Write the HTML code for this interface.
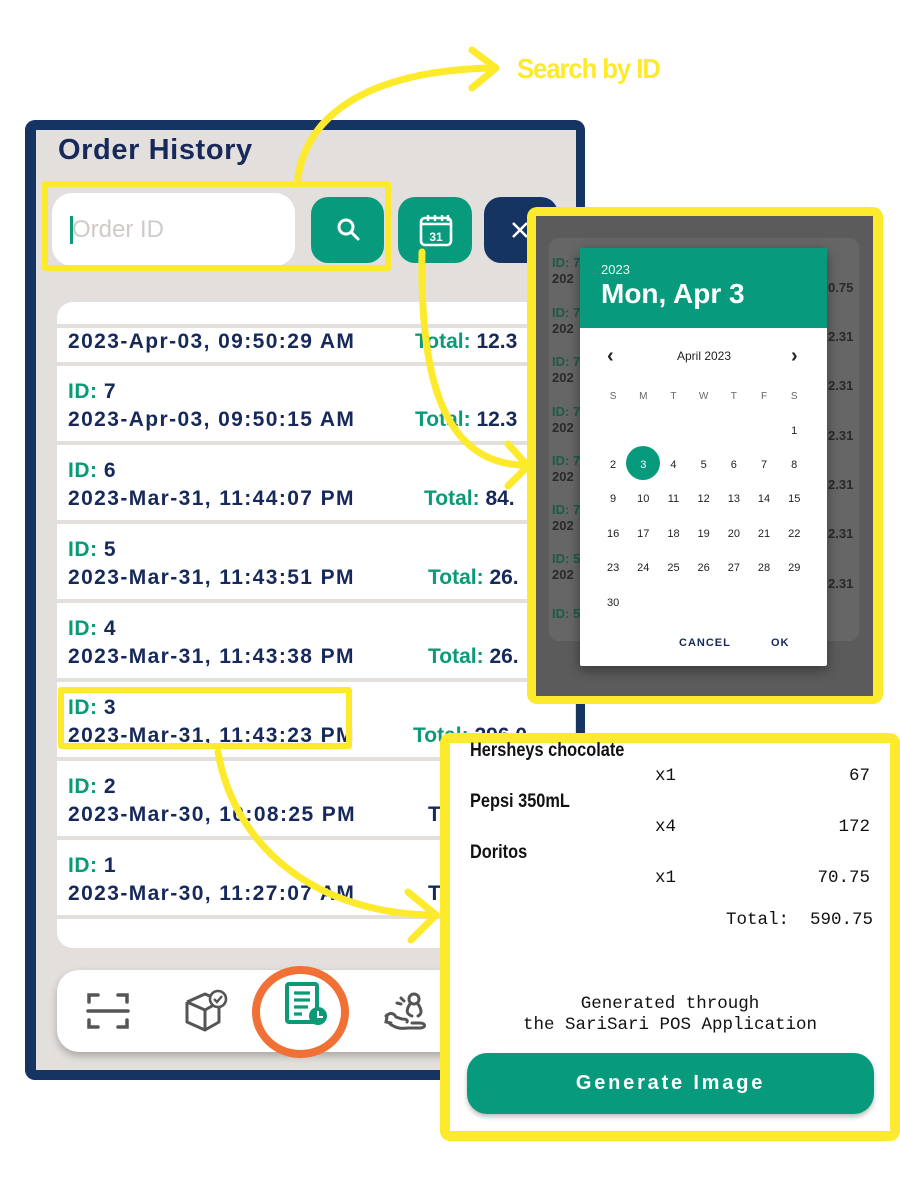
<!DOCTYPE html>
<html><head><meta charset="utf-8"><style>
*{margin:0;padding:0;box-sizing:border-box}
body{width:900px;height:1200px;background:#fff;position:relative;overflow:hidden;font-family:"Liberation Sans",sans-serif}
.a{position:absolute}
.navy{color:#16295a}
.grn{color:#0b9a78}
.row{position:absolute;left:57px;width:518px;background:#fff;height:75px}
.row .id{position:absolute;left:11px;top:14px;font-size:21px;font-weight:bold;color:#16295a;letter-spacing:0.5px}
.row .dt{position:absolute;left:11px;top:42px;font-size:21px;font-weight:bold;color:#16295a;white-space:nowrap;letter-spacing:1.4px}
.row .tt{position:absolute;top:42px;font-size:21px;font-weight:bold;color:#16295a;white-space:nowrap}
.cal td{width:30.2px;height:34.4px;text-align:center;font-size:11px;color:#222;font-family:"Liberation Sans",sans-serif}
.mono{font-family:"Liberation Mono",monospace;font-size:17.5px;color:#111}
.it{font-family:"Liberation Sans",sans-serif;font-weight:bold;font-size:19px;color:#111;transform:scaleX(0.86);transform-origin:left;white-space:nowrap}
</style></head><body>

<!-- phone -->
<div class="a" style="left:25px;top:120px;width:560px;height:960px;background:#163461;border-radius:10px"></div>
<div class="a" style="left:36px;top:130px;width:540px;height:940px;background:#e2dfdc"></div>
<div class="a navy" style="left:58px;top:134px;font-size:29px;font-weight:bold;color:#16295a;letter-spacing:0.6px">Order History</div>
<div class="a" style="left:52px;top:193px;width:243px;height:73px;background:#fff;border-radius:20px"></div>
<div class="a" style="left:70px;top:216px;width:3px;height:28px;background:#0b9a78"></div>
<div class="a" style="left:72px;top:216px;font-size:24px;color:#cfcac8">Order ID</div>
<div class="a" style="left:311px;top:197px;width:73px;height:66px;background:#089a7c;border-radius:17px"></div>
<svg class="a" style="left:334px;top:216px" width="28" height="28" viewBox="0 0 28 28"><circle cx="12" cy="11" r="7" fill="none" stroke="#fff" stroke-width="3"/><path d="M17 16l7 7" stroke="#fff" stroke-width="3" stroke-linecap="round"/></svg>
<div class="a" style="left:398px;top:197px;width:74px;height:66px;background:#089a7c;border-radius:17px"></div>
<svg class="a" style="left:418px;top:212px" width="36" height="36" viewBox="0 0 36 36"><rect x="3" y="6" width="30" height="27" rx="4" fill="none" stroke="#fff" stroke-width="2.6"/><path d="M3 12h30M10 3v6M17 3v6M24 3v6M30 3v6" stroke="#fff" stroke-width="2.4"/><text x="18" y="29" font-size="12" font-weight="bold" fill="#fff" text-anchor="middle" font-family="Liberation Sans">31</text></svg>
<div class="a" style="left:484px;top:197px;width:74px;height:66px;background:#163461;border-radius:17px"></div>
<svg class="a" style="left:510px;top:220px" width="20" height="20"><path d="M3 3l14 14M17 3L3 17" stroke="#fff" stroke-width="2.6"/></svg>

<!-- list -->
<div class="a" style="left:57px;top:302px;width:518px;height:646px;background:#e2dfdc"></div>
<div class="a" style="left:57px;top:302px;width:518px;height:22px;background:#fff;border-radius:16px 16px 0 0"></div>
<div class="row" style="top:328px;height:34px"><div class="dt" style="top:2px">2023-Apr-03, 09:50:29 AM</div><div class="tt" style="left:358px;top:2px"><span class="grn">Total:</span> 12.3</div></div>
<div class="row" style="top:366px"><div class="id"><span class="grn">ID:</span> 7</div><div class="dt">2023-Apr-03, 09:50:15 AM</div><div class="tt" style="left:358px"><span class="grn">Total:</span> 12.3</div></div>
<div class="row" style="top:445px"><div class="id"><span class="grn">ID:</span> 6</div><div class="dt">2023-Mar-31, 11:44:07 PM</div><div class="tt" style="left:367px"><span class="grn">Total:</span> 84.</div></div>
<div class="row" style="top:524px"><div class="id"><span class="grn">ID:</span> 5</div><div class="dt">2023-Mar-31, 11:43:51 PM</div><div class="tt" style="left:371px"><span class="grn">Total:</span> 26.</div></div>
<div class="row" style="top:603px"><div class="id"><span class="grn">ID:</span> 4</div><div class="dt">2023-Mar-31, 11:43:38 PM</div><div class="tt" style="left:371px"><span class="grn">Total:</span> 26.</div></div>
<div class="row" style="top:682px"><div class="id"><span class="grn">ID:</span> 3</div><div class="dt">2023-Mar-31, 11:43:23 PM</div><div class="tt" style="left:356px"><span class="grn">Total:</span> 296.0</div></div>
<div class="row" style="top:761px"><div class="id"><span class="grn">ID:</span> 2</div><div class="dt">2023-Mar-30, 10:08:25 PM</div><div class="tt grn" style="left:371px">Total:</div></div>
<div class="row" style="top:840px"><div class="id"><span class="grn">ID:</span> 1</div><div class="dt">2023-Mar-30, 11:27:07 AM</div><div class="tt grn" style="left:371px">Total:</div></div>
<div class="a" style="left:57px;top:919px;width:518px;height:29px;background:#fff;border-radius:0 0 16px 16px"></div>
<!-- highlight id3 -->
<div class="a" style="left:58px;top:687px;width:294px;height:62px;border:6px solid #fdea2d;border-radius:3px"></div>
<div class="a" style="left:42px;top:181px;width:349px;height:90px;border:6px solid #fdea2d;border-radius:3px"></div>

<!-- nav -->
<div class="a" style="left:57px;top:970px;width:480px;height:82px;background:#fff;border-radius:22px;box-shadow:0 4px 8px rgba(0,0,0,.25)"></div>
<svg class="a" style="left:86px;top:990px" width="44" height="42" viewBox="0 0 44 42"><path d="M3 12V5h9M32 5h9v7M3 30v7h9M32 37h9v-7M2 21h40" fill="none" stroke="#555" stroke-width="3.5" stroke-linecap="round"/></svg>
<svg class="a" style="left:183px;top:988px" width="48" height="46" viewBox="0 0 48 46"><path d="M4 14l18-8 14 6M4 14l18 8 14-8M4 14v20l18 8V22M36 20v14l-14 8" fill="none" stroke="#555" stroke-width="3" stroke-linejoin="round"/><circle cx="35" cy="11" r="8" fill="#fff" stroke="#555" stroke-width="2.6"/><path d="M31 11l3 3 5-6" fill="none" stroke="#555" stroke-width="2.4"/></svg>
<svg class="a" style="left:284px;top:982px" width="46" height="46" viewBox="0 0 46 46"><rect x="3" y="2" width="30" height="38" rx="2" fill="none" stroke="#0b9a78" stroke-width="4"/><path d="M10 11h16M10 18h16M10 25h14M10 32h8" stroke="#0b9a78" stroke-width="3.2"/><circle cx="34" cy="34" r="9" fill="#0b9a78"/><path d="M34 29v6h5" fill="none" stroke="#fff" stroke-width="2"/></svg>
<svg class="a" style="left:383px;top:990px" width="46" height="44" viewBox="0 0 46 44"><circle cx="31" cy="9" r="5" fill="none" stroke="#555" stroke-width="3"/><path d="M27 14c-4 6-4 10 2 12M35 14c4 6 4 10 0 12M18 8l3 3M14 13l4 1M3 26c4-4 8-3 10 1l6 2c4 0 6 1 5 3M7 34c6 4 10 5 18 4h12c6 0 6-5 0-5h-8M4 27l-1 5 5 1" fill="none" stroke="#555" stroke-width="3" stroke-linecap="round"/></svg>
<div class="a" style="left:252px;top:966px;width:97px;height:92px;border:8px solid #f07035;border-radius:50%"></div>

<!-- calendar panel -->
<div class="a" style="left:527px;top:207px;width:356px;height:497px;background:#fdea2d;border-radius:10px"></div>
<div class="a" style="left:536px;top:216px;width:337px;height:480px;background:#5b5b5b"></div>
<div class="a" style="left:549px;top:238px;width:310px;height:403px;background:#666;border-radius:10px"></div>
<div class="a" style="left:552px;top:255px;font-size:13px;font-weight:bold;line-height:16px;color:#2a2a2a"><span style="color:#1d5a47">ID: 7</span><br>202</div>
<div class="a" style="left:552px;top:305px;font-size:13px;font-weight:bold;line-height:16px;color:#2a2a2a"><span style="color:#1d5a47">ID: 7</span><br>202</div>
<div class="a" style="left:552px;top:354px;font-size:13px;font-weight:bold;line-height:16px;color:#2a2a2a"><span style="color:#1d5a47">ID: 7</span><br>202</div>
<div class="a" style="left:552px;top:404px;font-size:13px;font-weight:bold;line-height:16px;color:#2a2a2a"><span style="color:#1d5a47">ID: 7</span><br>202</div>
<div class="a" style="left:552px;top:453px;font-size:13px;font-weight:bold;line-height:16px;color:#2a2a2a"><span style="color:#1d5a47">ID: 7</span><br>202</div>
<div class="a" style="left:552px;top:502px;font-size:13px;font-weight:bold;line-height:16px;color:#2a2a2a"><span style="color:#1d5a47">ID: 7</span><br>202</div>
<div class="a" style="left:552px;top:551px;font-size:13px;font-weight:bold;line-height:16px;color:#2a2a2a"><span style="color:#1d5a47">ID: 5</span><br>202</div>
<div class="a" style="left:552px;top:606px;font-size:13px;font-weight:bold;color:#1d5a47">ID: 5</div>
<div class="a" style="left:828px;top:280px;font-size:13px;font-weight:bold;color:#2a2a2a">0.75</div>
<div class="a" style="left:828px;top:329px;font-size:13px;font-weight:bold;color:#2a2a2a">2.31</div>
<div class="a" style="left:828px;top:378px;font-size:13px;font-weight:bold;color:#2a2a2a">2.31</div>
<div class="a" style="left:828px;top:428px;font-size:13px;font-weight:bold;color:#2a2a2a">2.31</div>
<div class="a" style="left:828px;top:477px;font-size:13px;font-weight:bold;color:#2a2a2a">2.31</div>
<div class="a" style="left:828px;top:526px;font-size:13px;font-weight:bold;color:#2a2a2a">2.31</div>
<div class="a" style="left:828px;top:576px;font-size:13px;font-weight:bold;color:#2a2a2a">2.31</div>
<div class="a" style="left:580px;top:248px;width:247px;height:418px;background:#fff;border-radius:2px;box-shadow:0 4px 12px rgba(0,0,0,.4)"></div>
<div class="a" style="left:580px;top:248px;width:247px;height:80px;background:#089a7c"></div>
<div class="a" style="left:601px;top:262px;font-size:13px;color:#e8f5f1">2023</div>
<div class="a" style="left:601px;top:278px;font-size:28px;color:#fff;font-weight:bold">Mon, Apr 3</div>
<div class="a" style="left:607px;top:345px;font-size:20px;font-weight:bold;color:#222">&#8249;</div>
<div class="a" style="left:791px;top:345px;font-size:20px;font-weight:bold;color:#222">&#8250;</div>
<div class="a" style="left:704px;top:349px;font-size:12px;color:#222;transform:translateX(-50%)">April 2023</div>
<div class="a" style="left:626px;top:446px;width:34px;height:34px;background:#089a7c;border-radius:50%"></div>
<table class="a cal" style="left:598px;top:379px;border-collapse:collapse">
<tr><td style="color:#666;font-size:10px">S</td><td style="color:#666;font-size:10px">M</td><td style="color:#666;font-size:10px">T</td><td style="color:#666;font-size:10px">W</td><td style="color:#666;font-size:10px">T</td><td style="color:#666;font-size:10px">F</td><td style="color:#666;font-size:10px">S</td></tr>
<tr><td></td><td></td><td></td><td></td><td></td><td></td><td>1</td></tr>
<tr><td>2</td><td style="color:#fff">3</td><td>4</td><td>5</td><td>6</td><td>7</td><td>8</td></tr>
<tr><td>9</td><td>10</td><td>11</td><td>12</td><td>13</td><td>14</td><td>15</td></tr>
<tr><td>16</td><td>17</td><td>18</td><td>19</td><td>20</td><td>21</td><td>22</td></tr>
<tr><td>23</td><td>24</td><td>25</td><td>26</td><td>27</td><td>28</td><td>29</td></tr>
<tr><td>30</td><td></td><td></td><td></td><td></td><td></td><td></td></tr>
</table>
<div class="a" style="left:679px;top:637px;font-size:11px;font-weight:bold;letter-spacing:1px;color:#16295a">CANCEL</div>
<div class="a" style="left:771px;top:637px;font-size:11px;font-weight:bold;letter-spacing:1px;color:#16295a">OK</div>

<!-- receipt -->
<div class="a" style="left:440px;top:733px;width:460px;height:408px;background:#fdea2d;border-radius:10px"></div>
<div class="a" style="left:450px;top:743px;width:440px;height:388px;background:#fff"></div>
<div class="a it" style="left:470px;top:740px">Hersheys chocolate</div>
<div class="a mono" style="left:655px;top:766px">x1</div><div class="a mono" style="left:770px;top:766px;width:100px;text-align:right">67</div>
<div class="a it" style="left:470px;top:791px">Pepsi 350mL</div>
<div class="a mono" style="left:655px;top:817px">x4</div><div class="a mono" style="left:770px;top:817px;width:100px;text-align:right">172</div>
<div class="a it" style="left:470px;top:842px">Doritos</div>
<div class="a mono" style="left:655px;top:868px">x1</div><div class="a mono" style="left:770px;top:868px;width:100px;text-align:right">70.75</div>
<div class="a mono" style="left:726px;top:910px;white-space:pre">Total:  590.75</div>
<div class="a mono" style="left:450px;top:994px;width:440px;text-align:center;line-height:21px">Generated through<br>the SariSari POS Application</div>
<div class="a" style="left:467px;top:1053px;width:407px;height:61px;background:#089a7c;border-radius:20px;box-shadow:0 3px 5px rgba(0,0,0,.25);color:#fff;font-weight:bold;font-size:20px;letter-spacing:2.8px;text-align:center;line-height:61px">Generate Image</div>

<!-- arrows -->
<svg class="a" style="left:0;top:0" width="900" height="1200">
<g fill="none" stroke="#fdea2d" stroke-width="7" stroke-linecap="round" stroke-linejoin="round">
<path d="M297 184C305 105 385 70 493 68"/>
<path d="M472 50L496 68 472 88"/>
<path d="M422 252C420 370 440 462 522 465"/>
<path d="M508 444L528 466 508 486"/>
<path d="M218 752C235 850 320 915 436 915"/>
<path d="M408 892L436 915 411 940"/>
</g>
<text x="517" y="78" font-family="Liberation Sans,sans-serif" font-weight="bold" font-size="28" fill="#fdea2d" letter-spacing="-1.2" transform="translate(517 0) scale(0.92 1) translate(-517 0)">Search by ID</text>
</svg>
</body></html>
